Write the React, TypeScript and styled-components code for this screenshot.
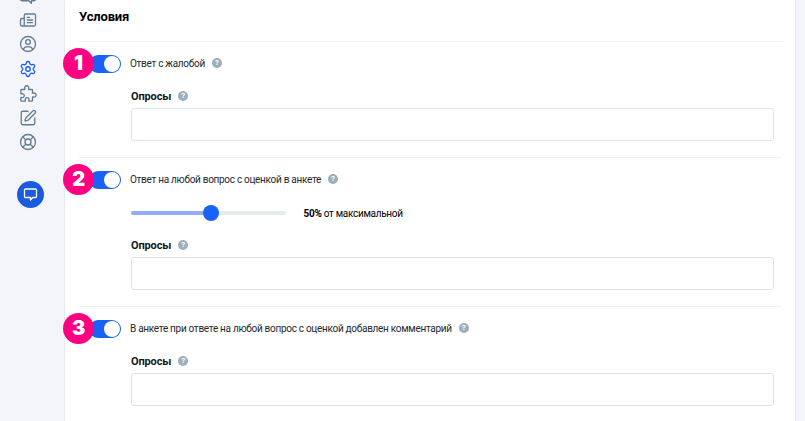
import * as React from "react";
import styled, { createGlobalStyle } from "styled-components";
import { LifeBuoy, Settings, SquarePen } from "lucide-react";

const GlobalStyle = createGlobalStyle`
  * {
    box-sizing: border-box;
  }
  body {
    margin: 0;
    background: #f4f5fa;
    font-family: Roboto, "Liberation Sans", sans-serif;
    color: #24292e;
  }
`;

const Page = styled.div`
  display: flex;
  height: 421px;
  overflow: hidden;
`;

const Sidebar = styled.nav`
  display: flex;
  flex-direction: column;
  align-items: center;
  width: 64px;
  margin-top: -12px;
  padding-right: 8px;
  flex-shrink: 0;
`;

const NavItem = styled.a<{ $active?: boolean; $gap?: number }>`
  display: flex;
  height: 18px;
  margin-bottom: ${(p) => p.$gap ?? 6}px;
  color: ${(p) => (p.$active ? "#1a5ff5" : "#627d8c")};
  & > svg {
    width: 18px;
    height: 18px;
    stroke-width: 1.75;
  }
`;

const ChatButton = styled.button`
  display: flex;
  align-items: center;
  justify-content: center;
  width: 27px;
  height: 27px;
  margin: 24px 0 0 5px;
  padding: 0;
  border: none;
  border-radius: 50%;
  background: #1a5be0;
`;

const Panel = styled.main`
  width: 732px;
  height: 440px;
  padding: 0 13px 0 14px;
  border: 1px solid #e6eaf0;
  border-width: 0 1px;
  background: #fff;
`;

const Title = styled.h2`
  height: 41px;
  margin: 0;
  padding-top: 9px;
  font-size: 13px;
  line-height: 16px;
  font-weight: 700;
  letter-spacing: -0.15px;
  color: #000;
`;

const Section = styled.section<{ $height: number }>`
  height: ${(p) => p.$height}px;
  border-top: 1px solid #eff1f3;
`;

const Head = styled.div`
  position: relative;
  display: flex;
  align-items: center;
  height: 44px;
  font-size: 10px;
  letter-spacing: -0.29px;
`;

const HeadText = styled.div`
  display: flex;
  align-items: center;
  height: 44px;
  padding-bottom: 2px;
`;

const Badge = styled.span`
  position: absolute;
  left: -16px;
  top: 6px;
  width: 31px;
  height: 31px;
  border-radius: 50%;
  background: #ff0080;
  color: #fff;
  font: 900 20px/31px Inter, sans-serif;
  text-align: center;
`;

const Toggle = styled.span`
  display: flex;
  justify-content: flex-end;
  width: 32px;
  height: 18px;
  margin: 0 9px 0 10px;
  padding: 1px;
  border-radius: 9px;
  background: #1a62f5;
  &::after {
    content: "";
    width: 16px;
    height: 16px;
    border-radius: 50%;
    background: #fff;
  }
`;

const Help = styled.span`
  display: inline-flex;
  align-items: center;
  justify-content: center;
  width: 10px;
  height: 10px;
  margin: 0 0 1px 7px;
  border-radius: 50%;
  background: #9aaebb;
  color: #fff;
  font-size: 8px;
  line-height: 10px;
  font-weight: 700;
  letter-spacing: 0;
`;

const Body = styled.div`
  padding: 0 8px 0 52px;
`;

const SliderRow = styled.div`
  display: flex;
  align-items: center;
  height: 16px;
  margin: 3px 0 14px;
  font-size: 10px;
  letter-spacing: -0.29px;
  color: #000;
`;

const Track = styled.div`
  display: flex;
  align-items: center;
  width: 155px;
  height: 4px;
  margin-right: 17.5px;
  border-radius: 2px;
  background: #e4ecee;
`;

const Fill = styled.div`
  height: 4px;
  border-radius: 2px;
  background: #91acf8;
`;

const Thumb = styled.div`
  width: 16px;
  height: 16px;
  margin-left: -6px;
  border-radius: 50%;
  background: #1a62f5;
`;

const FieldLabel = styled.div`
  display: flex;
  align-items: center;
  height: 22px;
  padding-bottom: 2px;
  font-size: 11px;
  font-weight: 700;
  letter-spacing: -0.13px;
  color: #14181c;
`;

const Field = styled.input`
  display: block;
  width: 100%;
  height: 33px;
  border: 1px solid #dbe5e9;
  border-radius: 3px;
  background: #fff;
`;

const BubbleIcon = () => (
  <svg viewBox="0 0 24 24" fill="none" stroke="currentColor" strokeLinejoin="round">
    <path d="M4 3h16a2 2 0 0 1 2 2v10a2 2 0 0 1-2 2h-3.5v3.5L13 17H4a2 2 0 0 1-2-2V5a2 2 0 0 1 2-2z" />
  </svg>
);

const NewsIcon = () => (
  <svg
    viewBox="0 0 24 24"
    fill="none"
    stroke="currentColor"
    strokeLinecap="round"
    strokeLinejoin="round"
  >
    <path d="M4 20h16a2 2 0 0 0 2-2V6a2 2 0 0 0-2-2H9a2 2 0 0 0-2 2v11.5a2.5 2.5 0 0 1-5 0V12a2 2 0 0 1 2-2h3" />
    <path d="M11 8.5h3M11 12h7M11 15.5h7" />
  </svg>
);

const UserIcon = () => (
  <svg viewBox="0 0 24 24" fill="none" stroke="currentColor" strokeLinecap="round">
    <circle cx="12" cy="12" r="10" />
    <circle cx="12" cy="9.3" r="3.2" />
    <path d="M5.8 19c.8-2.4 3.2-3.6 6.2-3.6s5.400 1.200 6.200 3.600" />
  </svg>
);

const PuzzleIcon = () => (
  <svg viewBox="0 0 24 24" fill="none" stroke="currentColor" strokeLinejoin="round">
    <path d="M3.500 6h3.700c.6 0 .8-.4.6-.9a2.800 2.800 0 1 1 5 0c-.2.5 0 .9.6.9h3.600a1 1 0 0 1 1 1v3.400c0 .6.4.8.9.6a2.700 2.700 0 1 1 0 4.800c-.5-.2-.9 0-.9.6v4.100a1 1 0 0 1-1 1h-3.300c-.6 0-.7-.4-.5-.9a2.600 2.600 0 1 0-4.700 0c.2.5 0 .9-.5.9H3.500a1 1 0 0 1-1-1v-3.500c0-.6.4-.7.9-.5a2.600 2.600 0 1 0 0-4.700c-.5.2-.9 0-.9-.5V7a1 1 0 0 1 1-1z" />
  </svg>
);

interface IConditionProps {
  num: number;
  title: string;
  height: number;
  percent?: number;
}

function Condition({ num, title, height, percent }: IConditionProps) {
  return (
    <Section $height={height}>
      <Head>
        <Toggle />
        <Badge>{num}</Badge>
        <HeadText>
          <span>{title}</span>
          <Help>?</Help>
        </HeadText>
      </Head>
      <Body>
        {percent !== undefined && (
          <SliderRow>
            <Track>
              <Fill style={{ width: `${percent}%` }} />
              <Thumb />
            </Track>
            <span>
              <b>{percent}%</b> от максимальной
            </span>
          </SliderRow>
        )}
        <FieldLabel>
          Опросы
          <Help>?</Help>
        </FieldLabel>
        <Field />
      </Body>
    </Section>
  );
}

export default function App() {
  return (
    <Page>
      <GlobalStyle />
      <Sidebar>
        <NavItem $gap={5}>
          <BubbleIcon />
        </NavItem>
        <NavItem>
          <NewsIcon />
        </NavItem>
        <NavItem $gap={7}>
          <UserIcon />
        </NavItem>
        <NavItem $active $gap={7}>
          <Settings />
        </NavItem>
        <NavItem>
          <PuzzleIcon />
        </NavItem>
        <NavItem>
          <SquarePen />
        </NavItem>
        <NavItem>
          <LifeBuoy />
        </NavItem>
        <ChatButton>
          <svg width="15" height="15" viewBox="0 0 15 15" fill="none">
            <path
              d="M2.5 2h10a1 1 0 0 1 1 1v6.500a1 1 0 0 1-1 1H9.700L7.500 13v-2.500h-5a1 1 0 0 1-1-1V3a1 1 0 0 1 1-1z"
              stroke="#fff"
              strokeWidth="1.3"
              strokeLinejoin="round"
            />
          </svg>
        </ChatButton>
      </Sidebar>
      <Panel>
        <Title>Условия</Title>
        <Condition num={1} title="Ответ с жалобой" height={116} />
        <Condition
          num={2}
          title="Ответ на любой вопрос с оценкой в анкете"
          height={149}
          percent={50}
        />
        <Condition
          num={3}
          title="В анкете при ответе на любой вопрос с оценкой добавлен комментарий"
          height={116}
        />
      </Panel>
    </Page>
  );
}
